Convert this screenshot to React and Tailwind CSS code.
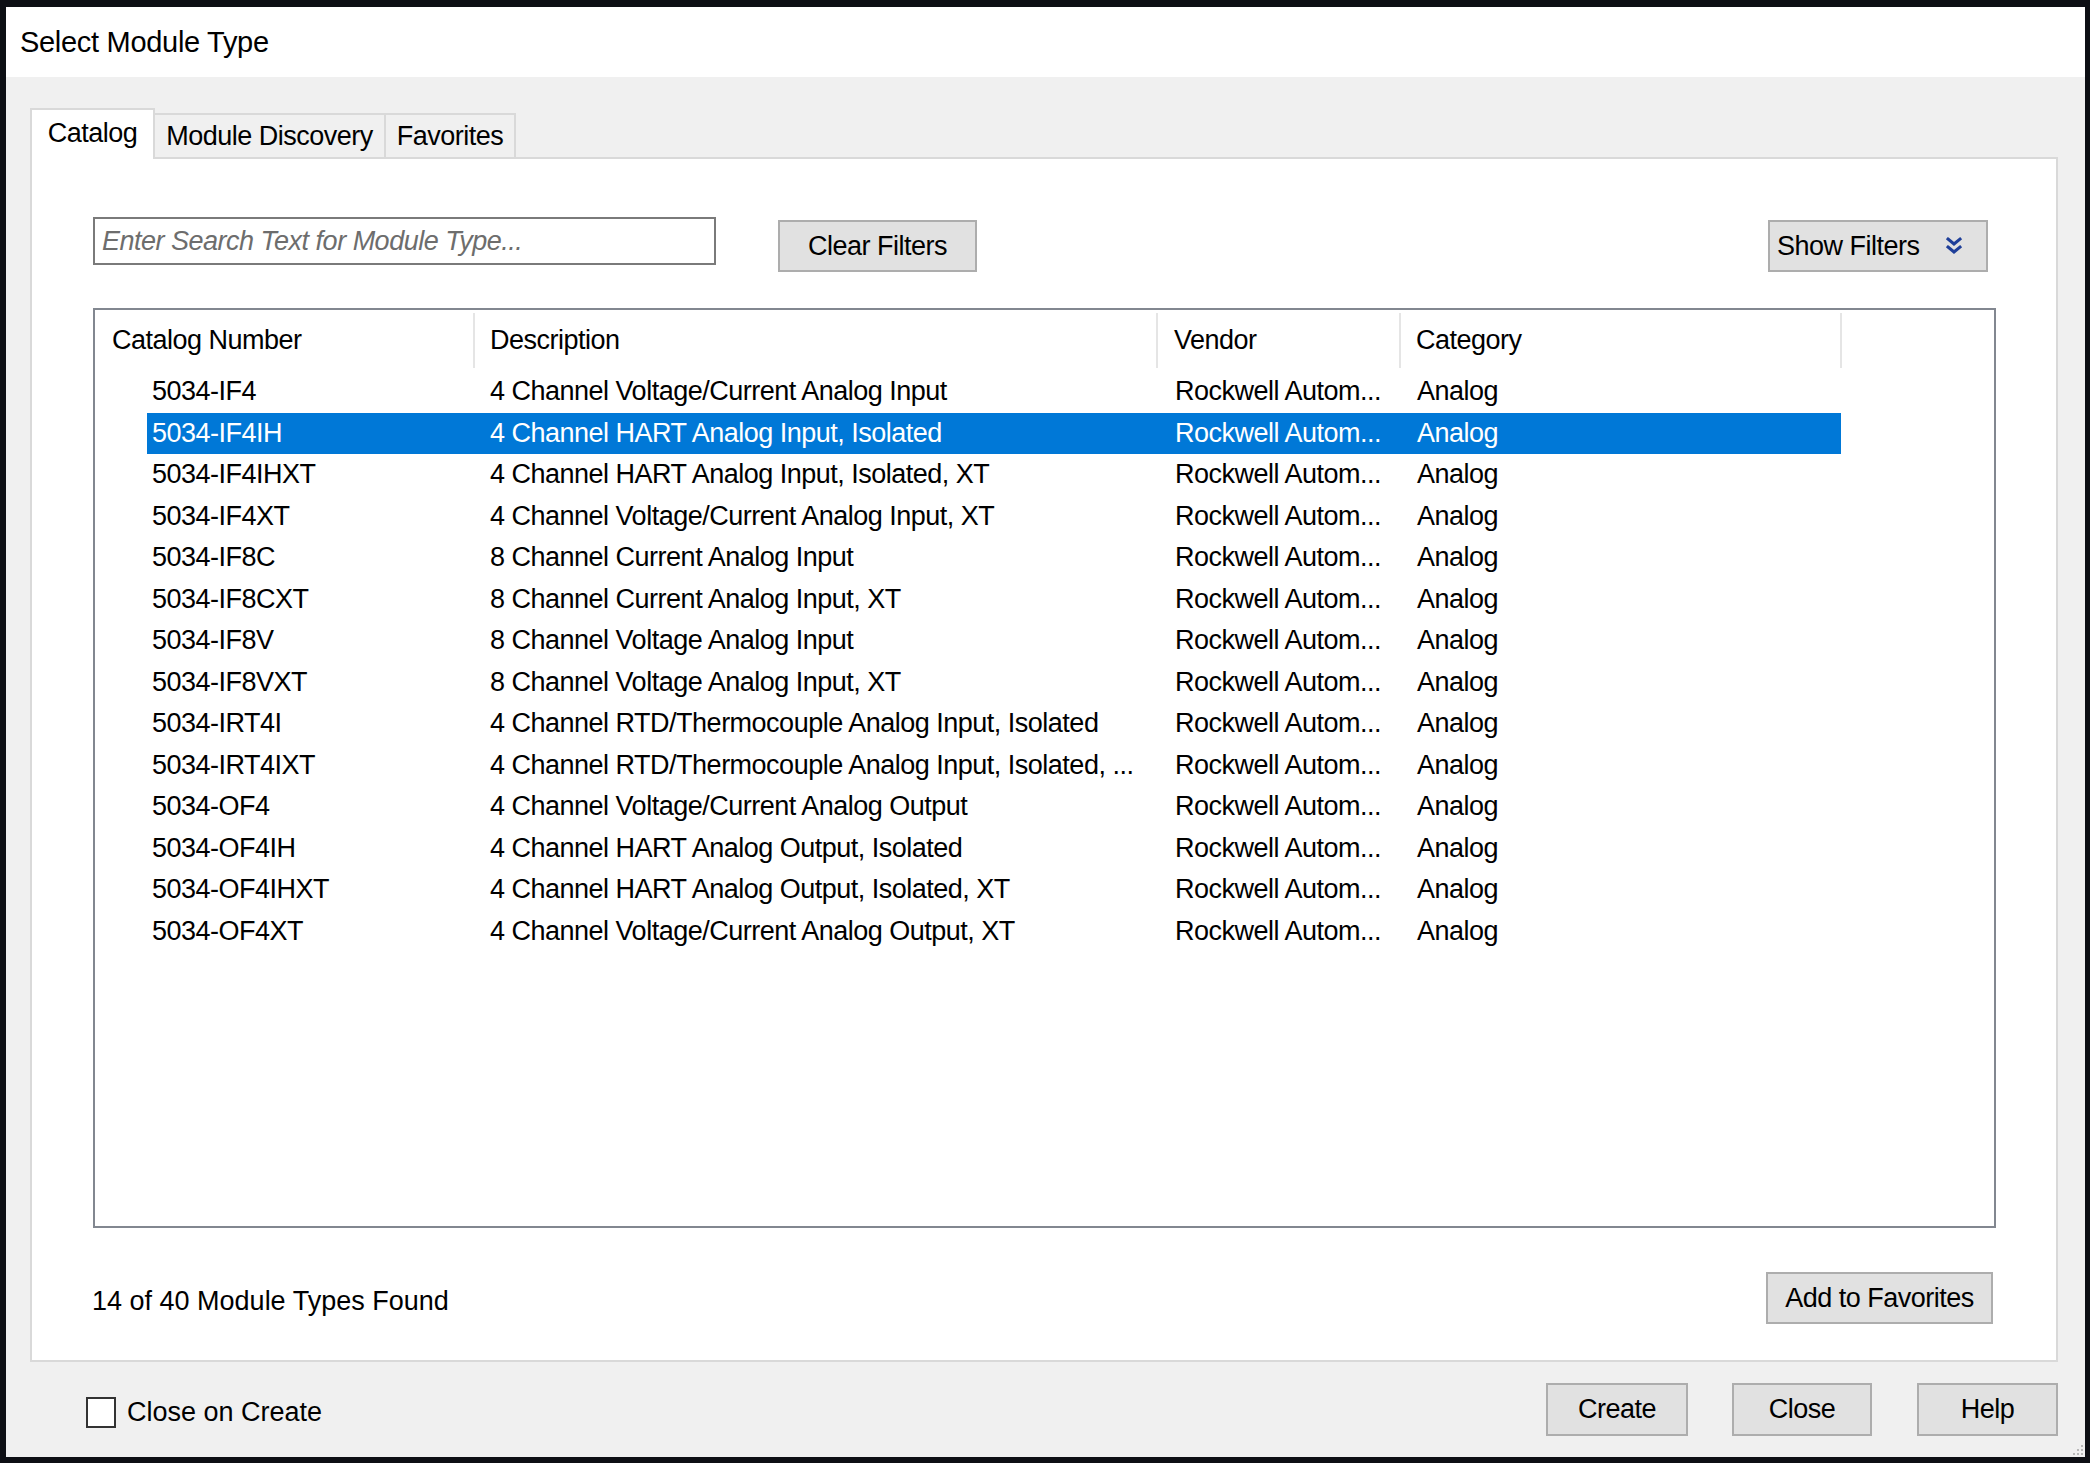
import React from "react";

const rows = [
  ["5034-IF4", "4 Channel Voltage/Current Analog Input"],
  ["5034-IF4IH", "4 Channel HART Analog Input, Isolated"],
  ["5034-IF4IHXT", "4 Channel HART Analog Input, Isolated, XT"],
  ["5034-IF4XT", "4 Channel Voltage/Current Analog Input, XT"],
  ["5034-IF8C", "8 Channel Current Analog Input"],
  ["5034-IF8CXT", "8 Channel Current Analog Input, XT"],
  ["5034-IF8V", "8 Channel Voltage Analog Input"],
  ["5034-IF8VXT", "8 Channel Voltage Analog Input, XT"],
  ["5034-IRT4I", "4 Channel RTD/Thermocouple Analog Input, Isolated"],
  ["5034-IRT4IXT", "4 Channel RTD/Thermocouple Analog Input, Isolated, ..."],
  ["5034-OF4", "4 Channel Voltage/Current Analog Output"],
  ["5034-OF4IH", "4 Channel HART Analog Output, Isolated"],
  ["5034-OF4IHXT", "4 Channel HART Analog Output, Isolated, XT"],
  ["5034-OF4XT", "4 Channel Voltage/Current Analog Output, XT"],
];

function Btn({ className = "", children }) {
  return (
    <div
      className={
        "h-[52px] bg-[#e1e1e1] border-2 border-[#adadad] flex items-center justify-center text-black " +
        className
      }
    >
      {children}
    </div>
  );
}

export default function App() {
  return (
    <div
      className="w-[2090px] h-[1463px] bg-[#0d0f14] pt-[7px] pl-[6px] pr-[5px] pb-[6px] text-[27px] tracking-[-0.5px] leading-none"
      style={{ fontFamily: '"Liberation Sans", Arial, sans-serif' }}
    >
      <div className="flex flex-col h-full bg-[#f0f0f0]">
        {/* title bar */}
        <div className="h-[70px] shrink-0 bg-white flex items-center pl-[14px] text-[29px] tracking-[-0.3px] text-black">
          Select Module Type
        </div>

        {/* body */}
        <div className="flex-1 flex flex-col pl-[24px] pr-[27px] pt-[31px] relative">
          {/* tabs */}
          <div className="h-[49px] flex items-end shrink-0">
            <div className="relative z-10 -mb-[2px] w-[125px] h-[51px] bg-white border-2 border-b-0 border-[#d9d9d9] flex items-center justify-center pb-[2px] text-black">
              Catalog
            </div>
            <div className="w-[231px] h-[44px] bg-[#f0f0f0] border-2 border-l-0 border-b-0 border-[#d9d9d9] flex items-center justify-center text-black">
              Module Discovery
            </div>
            <div className="w-[130px] h-[44px] bg-[#f0f0f0] border-2 border-l-0 border-b-0 border-[#d9d9d9] flex items-center justify-center text-black">
              Favorites
            </div>
          </div>

          {/* panel */}
          <div className="h-[1205px] shrink-0 bg-white border-2 border-[#d9d9d9] pl-[61px] pr-[60px] pt-[58px] flex flex-col">
            {/* search row */}
            <div className="flex items-start h-[55px]">
              <div className="w-[623px] h-[48px] border-2 border-[#7a7a7a] bg-white flex items-center pl-[7px] italic text-[#6d6d6d]">
                Enter Search Text for Module Type...
              </div>
              <Btn className="ml-[62px] mt-[3px] w-[199px]">Clear Filters</Btn>
              <Btn className="ml-auto mr-[8px] mt-[3px] w-[220px] !justify-start pl-[7px]">
                <span>Show Filters</span>
                <svg
                  width="20"
                  height="22"
                  viewBox="0 0 20 22"
                  className="ml-[24px]"
                  fill="none"
                  stroke="#1f3f99"
                  strokeWidth="3"
                  strokeLinecap="square"
                >
                  <polyline points="4,4 10,9 16,4" />
                  <polyline points="4,12 10,17 16,12" />
                </svg>
              </Btn>
            </div>

            {/* list */}
            <div className="mt-[36px] h-[920px] border-2 border-[#828790] bg-white flex flex-col">
              <div className="h-[61px] flex shrink-0 text-black">
                <div className="w-[380px] flex items-center pl-[17px] border-r-2 border-[#e5e5e5] my-[3px] h-[55px]">
                  Catalog Number
                </div>
                <div className="w-[683px] flex items-center pl-[15px] border-r-2 border-[#e5e5e5] my-[3px] h-[55px]">
                  Description
                </div>
                <div className="w-[243px] flex items-center pl-[16px] border-r-2 border-[#e5e5e5] my-[3px] h-[55px]">
                  Vendor
                </div>
                <div className="w-[441px] flex items-center pl-[15px] border-r-2 border-[#e5e5e5] my-[3px] h-[55px]">
                  Category
                </div>
              </div>
              <div className="flex flex-col">
                {rows.map(([cat, desc], i) => {
                  const sel = i === 1;
                  return (
                    <div
                      key={cat}
                      className={
                        "ml-[52px] w-[1694px] h-[41.5px] flex items-center whitespace-nowrap " +
                        (sel ? "bg-[#0078d7] text-white" : "text-black")
                      }
                    >
                      <div className="w-[327px] pl-[5px]">{cat}</div>
                      <div className="w-[683px] pl-[16px]">{desc}</div>
                      <div className="w-[243px] pl-[18px]">Rockwell Autom...</div>
                      <div className="w-[441px] pl-[17px]">Analog</div>
                    </div>
                  );
                })}
              </div>
            </div>

            {/* footer in panel */}
            <div className="mt-[44px] flex items-center">
              <div className="-ml-[1px] pt-[6px] text-black tracking-normal">14 of 40 Module Types Found</div>
              <Btn className="ml-auto mr-[3px] w-[227px]">Add to Favorites</Btn>
            </div>
          </div>

          {/* bottom row */}
          <div className="mt-[21px] h-[53px] flex items-center shrink-0">
            <div className="ml-[56px] mt-[6px] flex items-center">
              <div className="w-[30px] h-[31px] border-2 border-[#333333] bg-white" />
              <span className="ml-[11px] text-black tracking-normal">Close on Create</span>
            </div>
            <Btn className="ml-auto w-[142px] !h-[53px]">Create</Btn>
            <Btn className="ml-[44px] w-[140px] !h-[53px]">Close</Btn>
            <Btn className="ml-[45px] w-[141px] !h-[53px]">Help</Btn>
          </div>

          {/* resize grip */}
          <svg
            className="absolute right-[1px] bottom-[1px]"
            width="12"
            height="12"
            viewBox="0 0 12 12"
            fill="#b8b8b8"
          >
            <rect x="9" y="1" width="2" height="2" />
            <rect x="5" y="5" width="2" height="2" />
            <rect x="9" y="5" width="2" height="2" />
            <rect x="1" y="9" width="2" height="2" />
            <rect x="5" y="9" width="2" height="2" />
            <rect x="9" y="9" width="2" height="2" />
          </svg>
        </div>
      </div>
    </div>
  );
}
